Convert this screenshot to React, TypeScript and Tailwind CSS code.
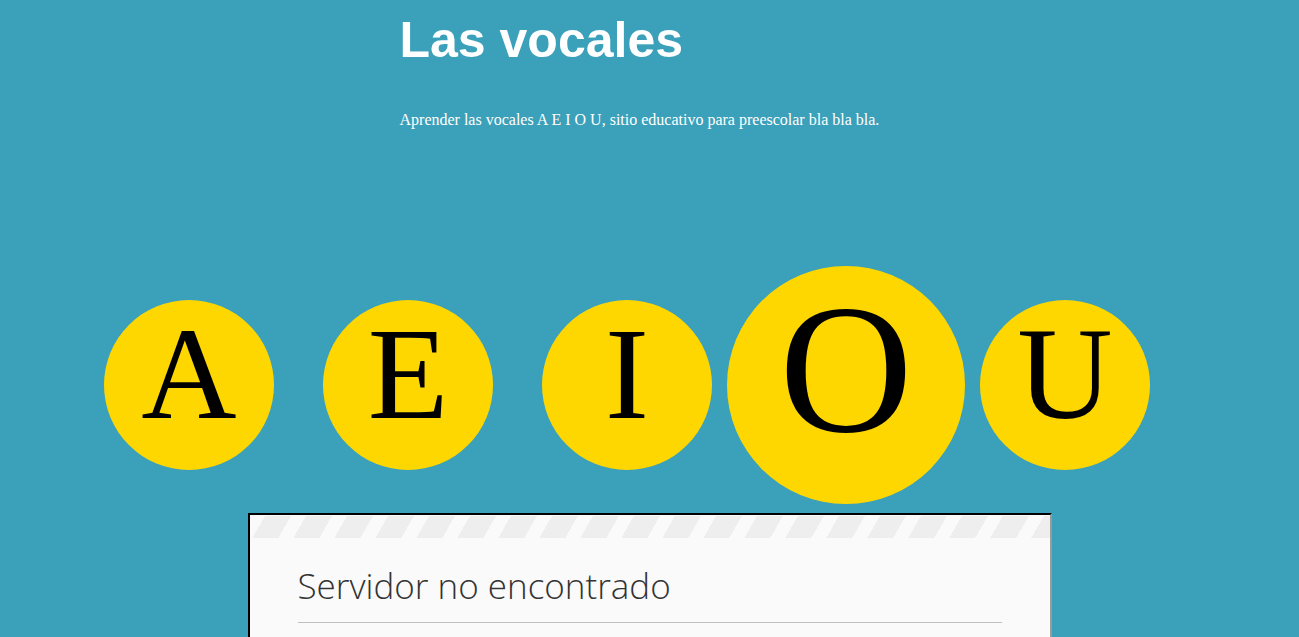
const vocales = ["A", "E", "I", "O", "U"]

function Vocal({ letra, activa }: { letra: string; activa?: boolean }) {
  return (
    <div
      className={
        "w-[170px] h-[170px] shrink-0 rounded-full bg-[#ffd700] text-center text-black text-[132px] leading-[147px] font-['Liberation_Serif','Times_New_Roman',serif] " +
        (activa ? "scale-[1.4]" : "")
      }
    >
      {letra}
    </div>
  )
}

function App() {
  return (
    <div className="min-h-screen bg-[#3ba0b9] overflow-hidden">
      <div className="w-[500px] mx-auto pt-[15px]">
        <h1 className="text-[50px] leading-none font-bold text-white font-['Liberation_Sans',Arial,sans-serif]">
          Las vocales
        </h1>
        <p className="mt-[47px] text-[16px] leading-none text-white font-['Liberation_Serif','Times_New_Roman',serif]">
          Aprender las vocales A E I O U, sitio educativo para preescolar bla bla bla.
        </p>
      </div>

      <div className="flex gap-[49px] pl-[104px] mt-[172px]">
        {vocales.map(v => (
          <Vocal key={v} letra={v} activa={v === "O"} />
        ))}
      </div>

      <div className="w-[804px] mx-auto mt-[43px] border-2 border-black border-r-[#9a9a9a] bg-[#fafafa] h-[200px]">
        <div className="h-[22px] mt-px bg-[repeating-linear-gradient(120deg,#fafafa_0px,#fafafa_13px,#eeeeee_13px,#eeeeee_35.5px)]"></div>
        <div className="px-[48px] pt-[30px]">
          <h2 className="text-[35px] leading-none font-light text-[#333] pb-[19px] border-b border-[#c0c0c0] font-['Open_Sans',sans-serif]">
            Servidor no encontrado
          </h2>
        </div>
      </div>
    </div>
  )
}

export default App
